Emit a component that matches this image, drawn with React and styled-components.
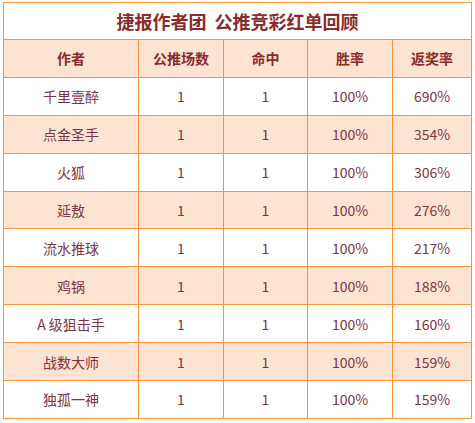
import styled, { createGlobalStyle } from "styled-components";

const GlobalStyle = createGlobalStyle`
  body {
    margin: 0;
    background: #ffffff;
    font-family: "Noto Sans CJK SC", "Noto Sans", sans-serif;
  }
`;

const rows = [
  ["千里壹醉", "1", "1", "100%", "690%"],
  ["点金圣手", "1", "1", "100%", "354%"],
  ["火狐", "1", "1", "100%", "306%"],
  ["延敖", "1", "1", "100%", "276%"],
  ["流水推球", "1", "1", "100%", "217%"],
  ["鸡锅", "1", "1", "100%", "188%"],
  ["A 级狙击手", "1", "1", "100%", "160%"],
  ["战数大师", "1", "1", "100%", "159%"],
  ["独孤一神", "1", "1", "100%", "159%"],
];

const headers = ["作者", "公推场数", "命中", "胜率", "返奖率"];
const widths = [135, 85, 84, 85, 79];

export default function App() {
  return (
    <>
      <GlobalStyle />
      <Wrap>
        <Table>
          <colgroup>
            {widths.map((w, i) => (
              <col key={i} style={{ width: w }} />
            ))}
          </colgroup>
          <tbody>
            <tr>
              <Title colSpan={5}>捷报作者团&nbsp; 公推竞彩红单回顾</Title>
            </tr>
            <tr>
              {headers.map((h) => (
                <Head key={h}>{h}</Head>
              ))}
            </tr>
            {rows.map((r, i) => (
              <tr key={i}>
                {r.map((c, j) => (
                  <Cell key={j} $shaded={i % 2 === 1}>
                    {c}
                  </Cell>
                ))}
              </tr>
            ))}
          </tbody>
        </Table>
      </Wrap>
    </>
  );
}

export const Wrap = styled.div`
  padding: 2px 0 0 3px;
`;

export const Table = styled.table`
  border-collapse: collapse;
  table-layout: fixed;
  width: 468px;
  border: 1.5px solid #f7943c;
`;

export const Title = styled.td`
  height: 36px;
  padding: 0;
  text-align: center;
  font-size: 18px;
  font-weight: 700;
  color: #8b2b2b;
  border: 1.5px solid #f7943c;
`;

export const Head = styled.td`
  height: 36.9px;
  padding: 0;
  text-align: center;
  font-size: 14px;
  font-weight: 700;
  color: #8b2b2b;
  background: #fde4d2;
  border: 1.5px solid #f7943c;
`;

export const Cell = styled.td`
  height: 36.9px;
  padding: 0;
  text-align: center;
  font-size: 14px;
  color: #7d3545;
  background: ${(p) => (p.$shaded ? "#fde4d2" : "#ffffff")};
  border: 1.5px solid #f7943c;
`;
